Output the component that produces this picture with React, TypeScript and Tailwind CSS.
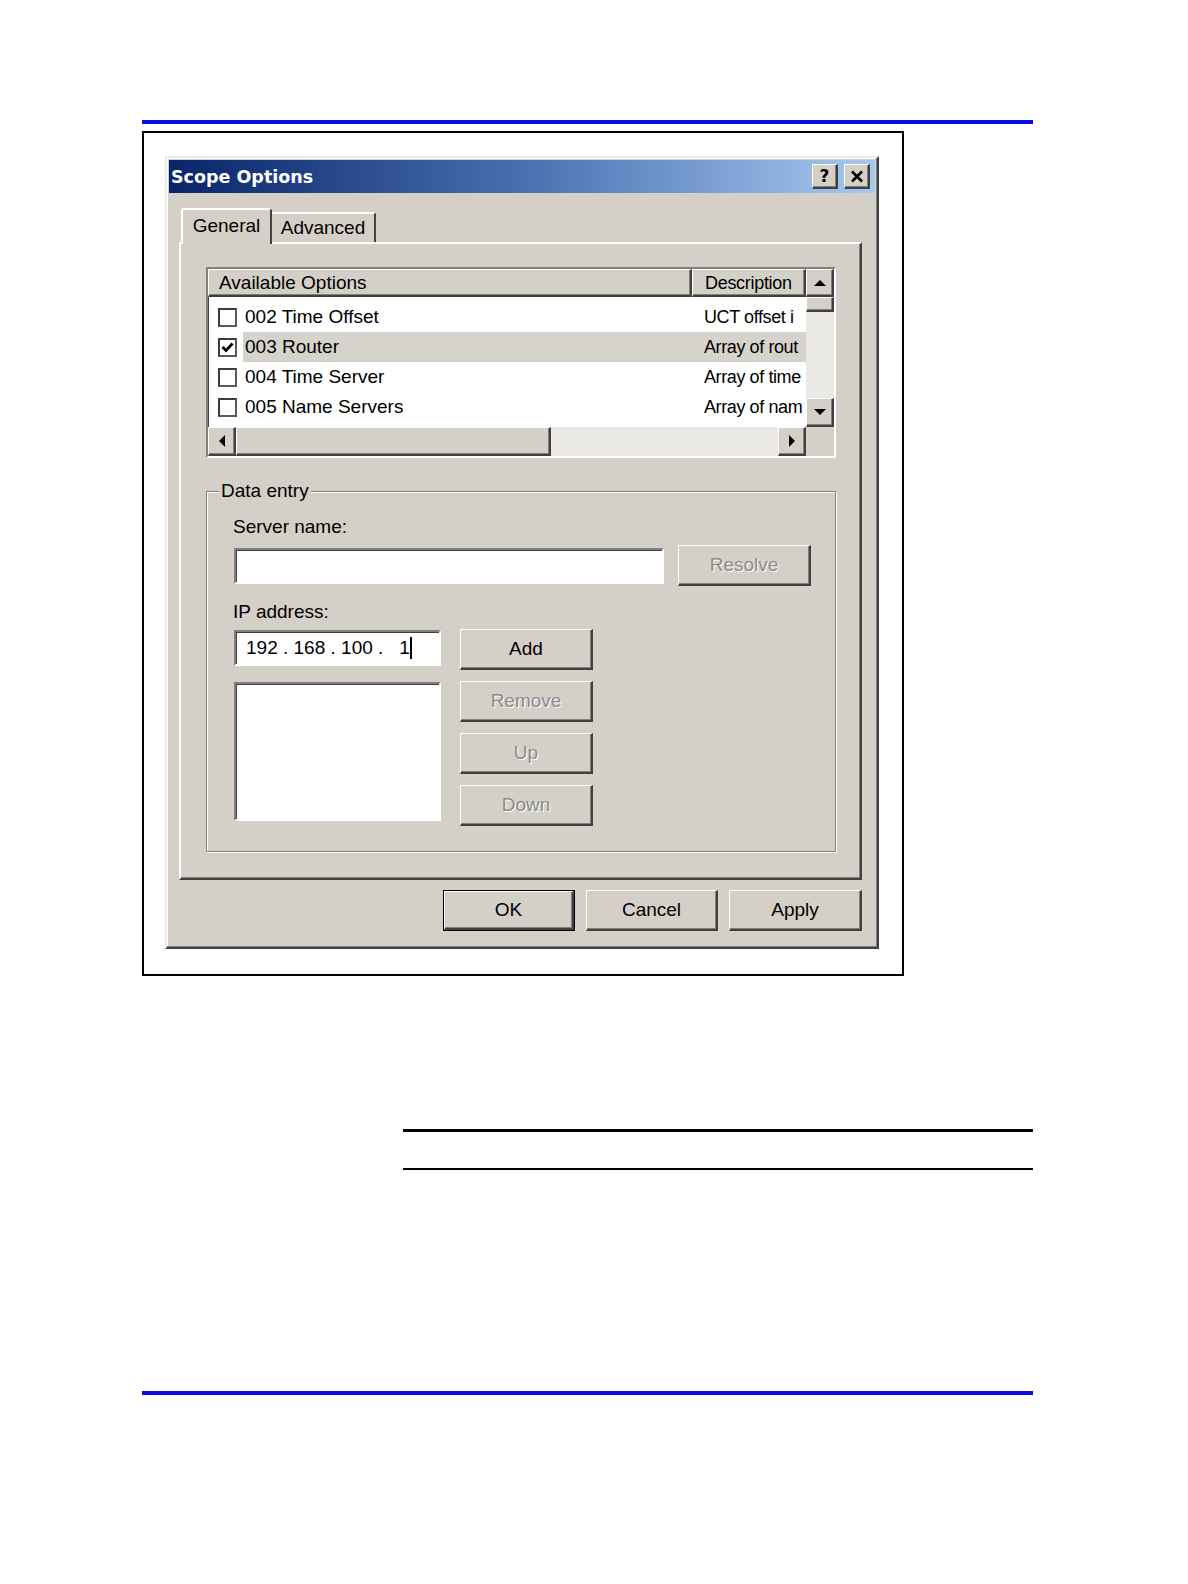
import React from "react";

const raised =
  "border-t border-l border-r-2 border-b-2 border-t-white border-l-white border-r-[#404040] border-b-[#404040] shadow-[inset_-1px_-1px_0_#808080] bg-[#d4d0c8]";
const sunken =
  "border-2 border-t-[#808080] border-l-[#808080] border-r-white border-b-white shadow-[inset_1px_1px_0_#404040]";
const disabledText = "text-[#8a8a8a] [text-shadow:1px_1px_0_#ffffff]";

function Tri({ dir }: { dir: "up" | "down" | "left" | "right" }) {
  const pts: Record<string, string> = {
    up: "1,7 7,1 13,7",
    down: "1,1 7,7 13,1",
    left: "7,1 1,7 7,13",
    right: "1,1 7,7 1,13",
  };
  const vertical = dir === "up" || dir === "down";
  return (
    <svg width={vertical ? 14 : 8} height={vertical ? 8 : 14} viewBox={vertical ? "0 0 14 8" : "0 0 8 14"}>
      <polygon points={pts[dir]} fill="#000" />
    </svg>
  );
}

function CheckBox({ checked }: { checked?: boolean }) {
  return (
    <div className="w-[19px] h-[19px] shrink-0 bg-white border-2 border-t-[#3c3c3c] border-l-[#3c3c3c] border-r-[#5a5a5a] border-b-[#5a5a5a] flex items-center justify-center">
      {checked && (
        <svg width="13" height="11" viewBox="0 0 13 11">
          <polyline points="1.5,5 5,8.5 11.5,1.5" fill="none" stroke="#000" strokeWidth="2.8" />
        </svg>
      )}
    </div>
  );
}

function Btn({ label, disabled, w = "w-[133px]", def }: { label: string; disabled?: boolean; w?: string; def?: boolean }) {
  const inner = (
    <div className={`${raised} ${def ? "w-full h-full" : `${w} h-[41px]`} shrink-0 flex items-center justify-center`}>
      <span className={disabled ? disabledText : "text-black"}>{label}</span>
    </div>
  );
  if (def) {
    return <div className={`${w} h-[41px] shrink-0 border border-black`}>{inner}</div>;
  }
  return inner;
}

const rows = [
  { name: "002 Time Offset", desc: "UCT offset i", checked: false, sel: false },
  { name: "003 Router", desc: "Array of rout", checked: true, sel: true },
  { name: "004 Time Server", desc: "Array of time", checked: false, sel: false },
  { name: "005 Name Servers", desc: "Array of nam", checked: false, sel: false },
];

export default function App() {
  return (
    <div
      className="w-[1188px] h-[1584px] bg-white flex flex-col text-[19px] leading-[22px] text-black"
      style={{ fontFamily: '"Liberation Sans", Arial, sans-serif' }}
    >
      <div className="mt-[120px] ml-[142px] w-[891px] h-[4px] bg-[#0a0ae0]" />

      <div className="mt-[7px] ml-[142px] w-[762px] h-[845px] border-2 border-black pl-[21px] pt-[23px]">
        {/* dialog */}
        <div className="w-[714px] h-[793px] bg-[#d4d0c8] border-2 border-t-[#ecebe6] border-l-[#ecebe6] border-r-[#404040] border-b-[#404040] shadow-[inset_-1px_-1px_0_#808080,inset_1px_1px_0_#fff] p-[2px] flex flex-col">
          {/* title bar */}
          <div className="h-[33px] shrink-0 bg-linear-to-r from-[#0a246a] via-[#4a6fb0] to-[#a8caf0] flex items-center pl-[2px] pr-[5px]">
            <span
              className="text-white font-bold text-[17.5px] flex-1"
              style={{ fontFamily: '"DejaVu Sans", Verdana, sans-serif' }}
            >
              Scope Options
            </span>
            <div className={`${raised} w-[26px] h-[25px] flex items-center justify-center`}>
              <span className="font-bold text-[17px] leading-none" style={{ fontFamily: '"DejaVu Sans", sans-serif' }}>?</span>
            </div>
            <div className={`${raised} w-[26px] h-[25px] ml-[6px] flex items-center justify-center`}>
              <svg width="14" height="13" viewBox="0 0 14 13">
                <path d="M2 1.5 L12 11.5 M12 1.5 L2 11.5" stroke="#000" strokeWidth="2.6" />
              </svg>
            </div>
          </div>

          <div className="pl-[10px] pr-[13px] flex flex-col">
            {/* tabs */}
            <div className="mt-[15px] pl-[2px] flex items-end relative z-10 -mb-[2px]">
              <div className="relative z-10 w-[91px] h-[36px] bg-[#d4d0c8] border-t-2 border-l-2 border-r-2 border-t-white border-l-white border-r-[#404040] rounded-t-[3px] flex items-start justify-center pt-[5px]">
                <span>General</span>
              </div>
              <div className="w-[104px] h-[30px] mb-[2px] bg-[#d4d0c8] border-t-2 border-r-2 border-t-white border-r-[#404040] rounded-tr-[3px] flex items-start justify-center pt-[3px]">
                <span>Advanced</span>
              </div>
            </div>

            {/* panel */}
            <div className="h-[638px] border-2 border-t-white border-l-white border-r-[#404040] border-b-[#404040] shadow-[inset_-1px_-1px_0_#808080] pt-[23px] pl-[25px] pr-[24px]">
              {/* list view */}
              <div className={`w-[630px] h-[191px] bg-white ${sunken} grid grid-cols-[598px_28px] grid-rows-[158px_29px]`}>
                <div className="flex flex-col overflow-hidden">
                  <div className="h-[28px] flex shrink-0">
                    <div className={`${raised} w-[484px] shrink-0 h-[28px] flex items-center pl-[10px]`}>Available Options</div>
                    <div className={`${raised} flex-1 min-w-0 h-[28px] flex items-center pl-[12px] whitespace-nowrap text-[18px] tracking-[-0.3px]`}>Description</div>
                  </div>
                  <div className="pt-[5px] flex flex-col">
                    {rows.map((r) => (
                      <div key={r.name} className="h-[30px] flex items-center">
                        <div className="w-[35px] shrink-0 flex items-center pl-[10px]">
                          <CheckBox checked={r.checked} />
                        </div>
                        <div className={`flex-1 min-w-0 h-[30px] flex items-center ${r.sel ? "bg-[#d6d3cd]" : ""}`}>
                          <div className="w-[449px] shrink-0 pl-[2px] whitespace-nowrap">{r.name}</div>
                          <div className="flex-1 min-w-0 pl-[12px] whitespace-nowrap text-[18px] tracking-[-0.4px]">{r.desc}</div>
                        </div>
                      </div>
                    ))}
                  </div>
                </div>
                {/* vertical scrollbar */}
                <div className="flex flex-col">
                  <div className={`${raised} h-[28px] shrink-0 flex items-center justify-center`}>
                    <Tri dir="up" />
                  </div>
                  <div className={`${raised} h-[15px] shrink-0`} />
                  <div className="flex-1 bg-[#ebe9e5]" />
                  <div className={`${raised} h-[29px] shrink-0 flex items-center justify-center`}>
                    <Tri dir="down" />
                  </div>
                </div>
                {/* horizontal scrollbar */}
                <div className="flex">
                  <div className={`${raised} w-[28px] h-[29px] shrink-0 flex items-center justify-center`}>
                    <Tri dir="left" />
                  </div>
                  <div className={`${raised} w-[315px] h-[29px] shrink-0`} />
                  <div className="flex-1 bg-[#ebe9e5]" />
                  <div className={`${raised} w-[28px] h-[29px] shrink-0 flex items-center justify-center`}>
                    <Tri dir="right" />
                  </div>
                </div>
                <div className="bg-[#d4d0c8]" />
              </div>

              {/* data entry group */}
              <div className="mt-[33px] w-[630px] h-[361px] relative border border-[#808080] shadow-[inset_1px_1px_0_#fff,1px_1px_0_#fff] pt-[24px] pl-[27px]">
                <span className="absolute -top-[12px] left-[12px] px-[2px] bg-[#d4d0c8]">Data entry</span>
                <div className="-ml-[1px]">Server name:</div>
                <div className="mt-[7px] flex items-center">
                  <div className={`w-[430px] h-[36px] shrink-0 bg-white ${sunken}`} />
                  <div className="ml-[14px]">
                    <Btn label="Resolve" disabled />
                  </div>
                </div>
                <div className="mt-[15px] -ml-[1px]">IP address:</div>
                <div className="mt-[6px] flex items-start">
                  <div className="w-[207px] shrink-0 mt-[1px] flex flex-col">
                    <div className={`h-[36px] bg-white ${sunken} flex items-center pl-[10px] whitespace-pre`}>
                      <span>192 . 168 . 100 .   1</span>
                      <span className="w-[2px] h-[22px] bg-black" />
                    </div>
                    <div className={`mt-[16px] h-[139px] bg-white ${sunken}`} />
                  </div>
                  <div className="ml-[19px] flex flex-col gap-[11px]">
                    <Btn label="Add" />
                    <Btn label="Remove" disabled />
                    <Btn label="Up" disabled />
                    <Btn label="Down" disabled />
                  </div>
                </div>
              </div>
            </div>

            {/* bottom buttons */}
            <div className="mt-[10px] flex justify-end gap-[11px]">
              <Btn label="OK" w="w-[132px]" def />
              <Btn label="Cancel" w="w-[132px]" />
              <Btn label="Apply" w="w-[133px]" />
            </div>
          </div>
        </div>
      </div>

      <div className="mt-[153px] ml-[403px] w-[630px] h-[3px] bg-black" />
      <div className="mt-[36px] ml-[403px] w-[630px] h-[2px] bg-black" />
      <div className="mt-[221px] ml-[142px] w-[891px] h-[4px] bg-[#0a0ae0]" />
    </div>
  );
}
